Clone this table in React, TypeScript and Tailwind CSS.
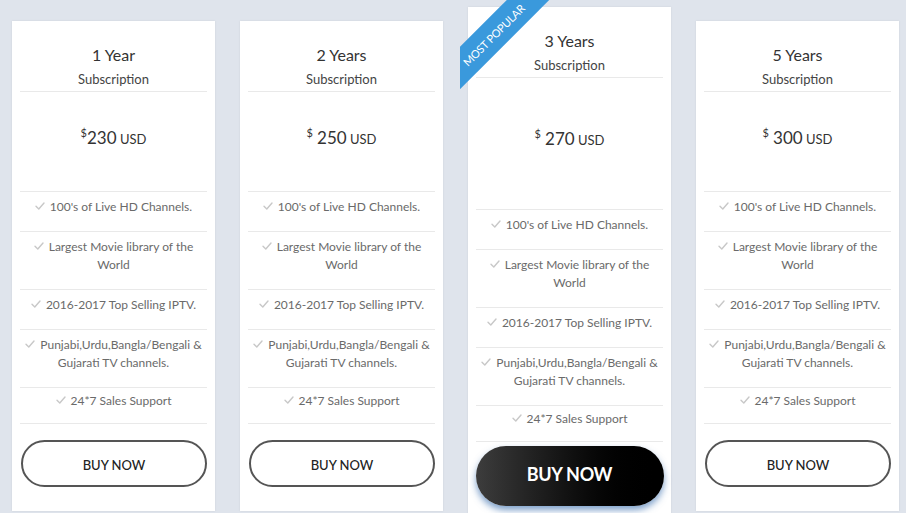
import React from "react";

const features: string[][] = [
  ["100's of Live HD Channels."],
  ["Largest Movie library of the", "World"],
  ["2016-2017 Top Selling IPTV."],
  ["Punjabi,Urdu,Bangla/Bengali &", "Gujarati TV channels."],
  ["24*7 Sales Support"],
];

function Check() {
  return (
    <svg width="10" height="8" viewBox="0 0 10 8" className="inline-block mr-[5px] align-[1px]">
      <path d="M1 4.2 L3.8 7 L9 1" fill="none" stroke="#c8c8c8" strokeWidth="1.4" strokeLinecap="round" strokeLinejoin="round" />
    </svg>
  );
}

function Features() {
  return (
    <ul className="mx-[8px] border-t border-[#e9e9e9]">
      {features.map((f, i) => (
        <li
          key={i}
          className={`border-b border-[#e9e9e9] text-center text-[12px] leading-[18px] text-[#6a6a6a] ${
            i === features.length - 1 ? "pt-[4px] pb-[13px]" : "pt-[6px] pb-[15px]"
          }`}
        >
          <Check />
          {f[0]}
          {f[1] && (
            <>
              <br />
              {f[1]}
            </>
          )}
        </li>
      ))}
    </ul>
  );
}

function Card({
  title,
  price,
  space,
  featured,
}: {
  title: string;
  price: string;
  space: boolean;
  featured?: boolean;
}) {
  return (
    <div
      className={`relative w-[203px] shrink-0 bg-white shadow-[0_0_2px_rgba(0,0,0,0.08)] ${
        featured ? "mt-[7px] h-[520px]" : "mt-[21px] h-[490px]"
      }`}
    >
      {featured && (
        <div className="absolute left-[-8px] top-[-7px] w-[100px] h-[89px] overflow-hidden z-10">
          <div className="absolute left-[-46px] top-[19px] w-[160px] h-[30px] bg-[#3a99dc] -rotate-45 flex items-center justify-center">
            <span className="text-white text-[11px] uppercase leading-none pr-[2px] tracking-[-0.2px]">Most Popular</span>
          </div>
        </div>
      )}
      <div className="mx-[8px] h-[71px] pt-[24px] text-center border-b border-[#e9e9e9]">
        <div className="text-[16px] leading-[20px] text-[#333]">{title}</div>
        <div className="mt-[5px] text-[13px] leading-[18px] text-[#444]">Subscription</div>
      </div>
      <div className={`text-center text-[#333] ${featured ? "h-[131px] pt-[48px]" : "h-[99px] pt-[33px]"}`}>
        <span className="text-[11px] align-[7px]">$</span>
        {space ? " " : ""}
        <span className="text-[17px] leading-[24px]">{price}</span>
        <span className="text-[13px]"> USD</span>
      </div>
      <Features />
      {featured ? (
        <div className="flex justify-center mt-[4px]">
          <button className="w-[188px] h-[60px] pb-[3px] rounded-full bg-gradient-to-r from-[#3d3d3d] via-[#111] to-black text-white text-[18px] font-bold tracking-[-0.3px] shadow-[0_4px_7px_rgba(70,120,180,0.7)]">
            BUY NOW
          </button>
        </div>
      ) : (
        <div className="flex justify-center mt-[16px] pl-[1px]">
          <button className="w-[186px] h-[47px] pt-[4px] rounded-full border-2 border-[#555] bg-white text-[#222] text-[13px] font-medium">
            BUY NOW
          </button>
        </div>
      )}
    </div>
  );
}

export default function App() {
  return (
    <div
      className="w-[906px] h-[513px] overflow-hidden bg-[#dfe4ec] flex items-start gap-[25px] pl-[12px]"
      style={{ fontFamily: "Lato, 'Open Sans', sans-serif" }}
    >
      <Card title="1 Year" price="230" space={false} />
      <Card title="2 Years" price="250" space={true} />
      <Card title="3 Years" price="270" space={true} featured />
      <Card title="5 Years" price="300" space={true} />
    </div>
  );
}
